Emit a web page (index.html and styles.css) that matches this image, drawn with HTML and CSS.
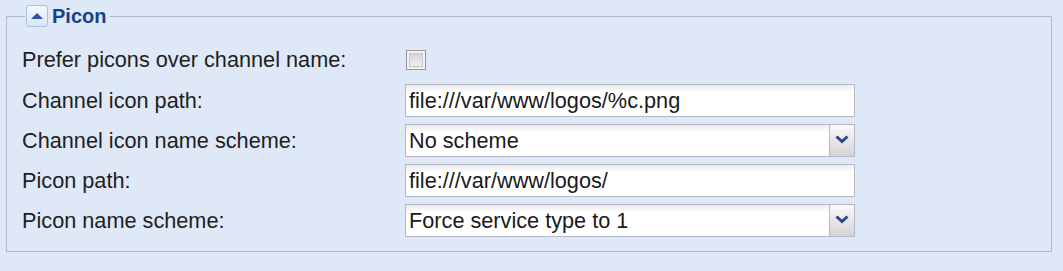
FILE: index.html
```html
<!DOCTYPE html>
<html lang="en">
<head>
	<meta charset="UTF-8">
	<title>Picon</title>
	<link rel="stylesheet" href="styles.css">
</head>
<body>
	<fieldset class="panel">
		<legend class="panel-title">
			<span class="toggle"><span class="arrow"></span></span>
			<span class="title-text">Picon</span>
		</legend>
		<div class="form">
			<label class="label">Prefer picons over channel name:</label>
			<div class="field"><input class="check" type="checkbox"></div>

			<label class="label">Channel icon path:</label>
			<div class="field"><input class="text" type="text" value="file:///var/www/logos/%c.png"></div>

			<label class="label">Channel icon name scheme:</label>
			<div class="field combo">
				<input class="text" type="text" value="No scheme" readonly>
				<span class="trigger">
					<svg class="chevron" width="14" height="9" viewBox="0 0 14 9"><polyline points="1.5,1.5 7,6.5 12.5,1.5" fill="none" stroke="#284a8a" stroke-width="3"/></svg>
				</span>
			</div>

			<label class="label">Picon path:</label>
			<div class="field"><input class="text" type="text" value="file:///var/www/logos/"></div>

			<label class="label">Picon name scheme:</label>
			<div class="field combo">
				<input class="text" type="text" value="Force service type to 1" readonly>
				<span class="trigger">
					<svg class="chevron" width="14" height="9" viewBox="0 0 14 9"><polyline points="1.5,1.5 7,6.5 12.5,1.5" fill="none" stroke="#284a8a" stroke-width="3"/></svg>
				</span>
			</div>
		</div>
	</fieldset>
</body>
</html>
```

FILE: styles.css
```css
*{
	margin: 0;
	padding: 0;
	box-sizing: border-box;
}
body{
	background: #dfe8f6;
	font-family: "Liberation Sans", Arial, sans-serif;
	color: #222;
	height: 271px;
	overflow: hidden;
}
.panel{
	margin: 5px 11px 0 6px;
	border: 1px solid #b5b8c8;
	padding: 15px 15px 14px 15px;
}
.panel-title{
	display: flex;
	align-items: center;
	margin-left: 3px;
	padding: 0 4px 0 1px;
	height: 22px;
}
.toggle{
	width: 22px;
	height: 22px;
	border: 1px solid #a8c1e6;
	border-radius: 3px;
	background: linear-gradient(#f5f9fe, #d9e5f7);
	position: relative;
}
.arrow{
	position: absolute;
	left: 4px;
	top: 7px;
	width: 0;
	height: 0;
	border-left: 6px solid transparent;
	border-right: 6px solid transparent;
	border-bottom: 6px solid #2c55a3;
}
.title-text{
	margin-left: 4px;
	font-size: 20px;
	font-weight: bold;
	color: #15428b;
	line-height: 22px;
}
.form{
	display: grid;
	grid-template-columns: 383px 450px;
	grid-template-rows: 35px repeat(4, 33px);
	row-gap: 7px;
	align-items: center;
}
.label{
	font-size: 21.7px;
	color: #1e1e1e;
}
.field{
	height: 100%;
	display: flex;
	align-items: center;
}
.check{
	appearance: none;
	width: 20px;
	height: 20px;
	margin-left: 1px;
	margin-top: 1px;
	border: 1px solid #9a9a9a;
	background: linear-gradient(#cfcfcf, #f4f4f4);
	box-shadow: inset 0 0 0 2px #f2f2f2, inset 0 0 0 3px #c8c8c8;
}
.text{
	width: 100%;
	height: 33px;
	border: 1px solid #b5b8c8;
	background: linear-gradient(#ececec, #fff 7px);
	font-family: "Liberation Sans", Arial, sans-serif;
	font-size: 21.7px;
	color: #1a1a1a;
	padding: 0 3px;
	outline: none;
}
.combo{
	position: relative;
}
.trigger{
	position: absolute;
	right: 0;
	top: 0;
	width: 26px;
	height: 33px;
	border: 1px solid #b5b8c8;
	background: linear-gradient(#fafafa, #d4d4d4);
	display: flex;
	align-items: center;
	justify-content: center;
}
.chevron{
	display: block;
	margin-top: -3px;
}
```
